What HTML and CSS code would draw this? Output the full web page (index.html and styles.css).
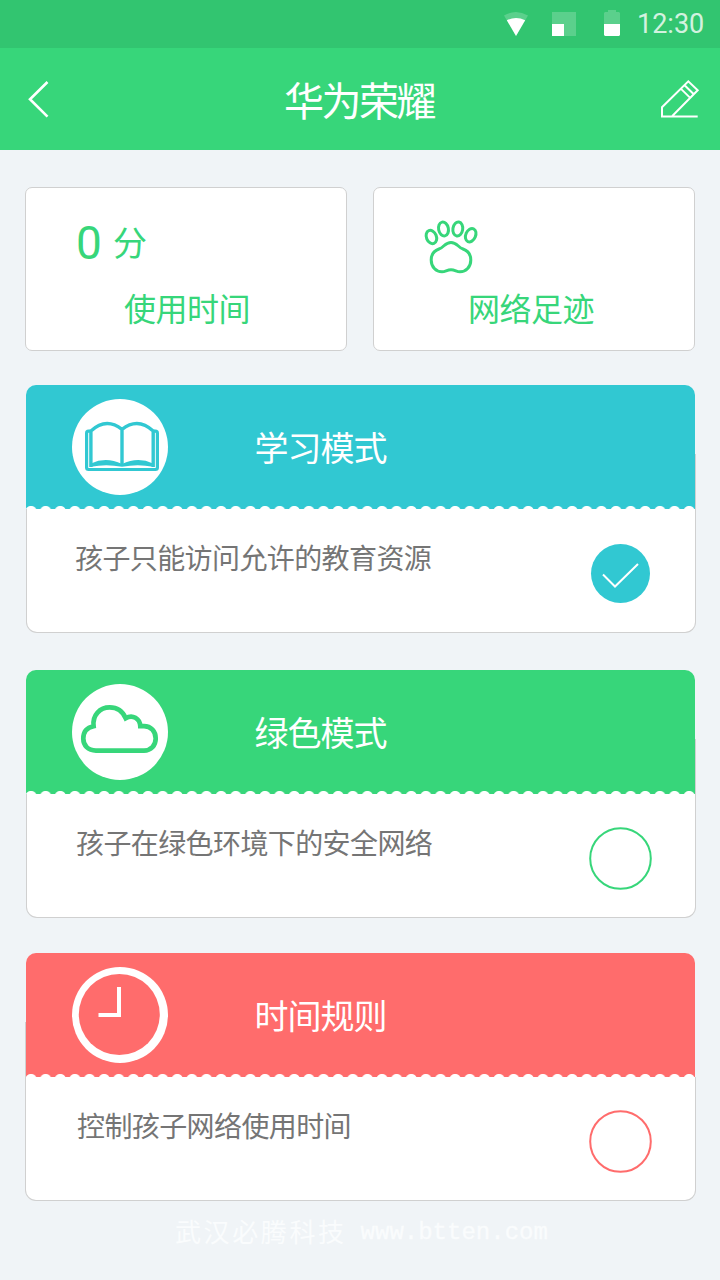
FILE: index.html
```html
<!DOCTYPE html>
<html lang="zh-CN">
<head>
    <meta charset="UTF-8">
    <meta name="viewport" content="width=device-width, initial-scale=1.0">
    <title>华为荣耀</title>
    <link rel="stylesheet" href="styles.css">
</head>
<body>
    <div class="status">
        <svg class="wifi" width="24" height="24" viewBox="0 0 24 24">
            <path d="M0 3.5Q12 -3.5 24 3.5L12 24Z" fill="#fff" fill-opacity=".2"/>
            <path d="M2.8 8.2Q12 3.8 21.2 8.2L12 24Z" fill="#fff"/>
        </svg>
        <svg class="signal" width="24" height="24">
            <path d="M0 0H24V24H0Z" fill="#fff" fill-opacity=".2"/>
            <path d="M0 12H12V24H0Z" fill="#fff"/>
        </svg>
        <svg class="battery" width="16" height="26">
            <path d="M4 0H12V2H15L16 3V14H0V3L1 2H4Z" fill="#fff" fill-opacity=".2"/>
            <path d="M0 14H16V25L15 26H1L0 25Z" fill="#fff"/>
        </svg>
        <span class="clock">12:30</span>
    </div>
    <header class="topbar">
        <svg width="24" height="40" viewBox="0 0 24 40" class="line">
            <path d="M21.5 3L4 20.2L21.5 37.7" stroke-width="2.6"/>
        </svg>
        <h1>华为荣耀</h1>
        <svg width="40" height="40" viewBox="0 0 40 40" class="line">
            <path d="M37.7 37.5H2V28.2L28.3 2.3L37.7 11.3L12.3 37M21 9.9L30.2 18.9M24.6 6.3L33.8 15.3" stroke-width="2"/>
        </svg>
    </header>

    <main>
        <div class="stats">
            <div class="stat">
                <p class="stat_top"><span class="num">0</span><span class="unit">分</span></p>
                <p class="stat_name name1">使用时间</p>
            </div>
            <div class="stat">
                <p class="stat_top">
                    <svg class="paw" width="56" height="56" viewBox="0 0 56 56">
                        <ellipse cx="8.4" cy="18" rx="5" ry="6.9" transform="rotate(-22 8.4 18)"/>
                        <ellipse cx="20.5" cy="10" rx="4.9" ry="7" transform="rotate(-12 20.5 10)"/>
                        <ellipse cx="34.8" cy="10" rx="4.9" ry="7" transform="rotate(9 34.8 10)"/>
                        <ellipse cx="47.7" cy="16.2" rx="4.9" ry="7" transform="rotate(24 47.7 16.2)"/>
                        <path d="M28 23.4C34 23.4 35 28.5 40 30C45 31.8 47.8 36 47.8 41C47.8 48 43 52.8 37 52.8C33.5 52.8 32 50.8 28 50.8C24 50.8 22.5 52.8 19 52.8C13 52.8 8.2 48 8.2 41C8.2 36 11 31.8 16 30C21 28.5 22 23.4 28 23.4Z"/>
                    </svg>
                </p>
                <p class="stat_name name2">网络足迹</p>
            </div>
        </div>

        <!-- 学习模式 -->
        <section class="card study">
            <div class="card_head">
                <svg width="96" height="96" viewBox="0 0 96 96">
                    <circle cx="48" cy="48" r="48" fill="#fff"/>
                    <g fill="none" stroke="#31c8d2" stroke-width="3.2">
                        <path d="M18 32.2H16.5Q14.6 32.2 14.6 34.2V68.5Q14.6 70.5 16.6 70.5H83.4Q85.4 70.5 85.4 68.5V34.2Q85.4 32.2 83.4 32.2H82"/>
                        <path d="M18.9 68V32Q34 17.8 50 30.3Q66 17.8 81.2 32V68M50 29.5V67" stroke-width="3.4"/>
                    </g>
                    <path d="M19 64.5Q34 57.5 50 65Q66 57.5 81 64.5V67.8Q66 64.5 50 67.8Q34 64.5 19 67.8Z" fill="#31c8d2"/>
                </svg>
                <h2>学习模式</h2>
            </div>
            <div class="card_body">
                <p class="desc1">孩子只能访问允许的教育资源</p>
                <svg class="check" width="64" height="64" viewBox="0 0 64 64">
                    <circle cx="31.5" cy="32.5" r="29.5" fill="#31c8d2"/>
                    <path d="M14 33.5L26 45.5L49 23" fill="none" stroke="#fff" stroke-width="2"/>
                </svg>
            </div>
        </section>

        <!-- 绿色模式 -->
        <section class="card green">
            <div class="card_head">
                <svg width="96" height="96" viewBox="0 0 96 96">
                    <circle cx="48" cy="48" r="48" fill="#fff"/>
                    <path d="M24 66.6C16 66.6 11.3 61.5 11.3 54.5C11.3 48 15 43.5 21.6 42.2C20.3 31 28 23.4 37.7 23.4C45 23.4 50.5 27 53.7 34.2C60.5 30 68 34.5 68.3 42.2H72C79 42.2 83.7 47.5 83.7 54.5C83.7 61.5 79 66.6 72 66.6Z" fill="none" stroke="#37d67a" stroke-width="4.7"/>
                </svg>
                <h2>绿色模式</h2>
            </div>
            <div class="card_body">
                <p class="desc2">孩子在绿色环境下的安全网络</p>
                <svg class="check" width="64" height="64" viewBox="0 0 64 64">
                    <circle cx="31.5" cy="32.5" r="30.3" fill="none" stroke="#37d67a" stroke-width="2"/>
                </svg>
            </div>
        </section>

        <!-- 时间规则 -->
        <section class="card time">
            <div class="card_head">
                <svg width="96" height="96" viewBox="0 0 96 96">
                    <circle cx="48" cy="48" r="48" fill="#fff"/>
                    <circle cx="47.3" cy="47.5" r="40.5" fill="#ff6c6c"/>
                    <path d="M47 20V48H26.5" fill="none" stroke="#fff" stroke-width="4"/>
                </svg>
                <h2>时间规则</h2>
            </div>
            <div class="card_body">
                <p class="desc3">控制孩子网络使用时间</p>
                <svg class="check" width="64" height="64" viewBox="0 0 64 64">
                    <circle cx="31.5" cy="32.5" r="30.3" fill="none" stroke="#ff6c6c" stroke-width="2"/>
                </svg>
            </div>
        </section>
    </main>
    <footer><span class="company">武汉必腾科技</span><span class="site">www.btten.com</span></footer>
</body>
</html>
```
FILE: styles.css
```css
*
{
    box-sizing: border-box;
    margin: 0;
    padding: 0;
}
body
{
    width: 720px;
    height: 1280px;
    overflow: hidden;
    background-color: #f0f4f7;
    font-family: "Noto Sans CJK SC", sans-serif;
    font-weight: 400;
}
svg
{
    display: block;
    flex: none;
}
h1, h2
{
    font-weight: 400;
    color: #fff;
    white-space: nowrap;
}

/* 状态栏 */
.status
{
    height: 48px;
    background-color: #32c570;
    display: flex;
    align-items: flex-start;
    justify-content: flex-end;
    padding: 12px 16px 0 0;
}
.signal
{
    margin-left: 24px;
}
.battery
{
    margin: -2px 17px 0 28px;
}
.clock
{
    width: 67px;
    font: 27px/25px Roboto, sans-serif;
    color: rgba(255,255,255,.8);
}

/* 标题栏 */
.topbar
{
    height: 102px;
    background-color: #37d67a;
    display: flex;
    align-items: center;
    justify-content: space-between;
    padding: 0 20px 0 26px;
}
.topbar h1
{
    font-size: 40px;
    line-height: 60px;
    letter-spacing: -2.5px;
    margin-left: 8px;
}
.line
{
    fill: none;
    stroke: #fff;
}

main
{
    padding: 37px 24px 0 25px;
}
.stats
{
    display: flex;
    gap: 26px;
    padding-right: 1px;
    margin-bottom: 34px;
}
.stat
{
    width: 322px;
    height: 164px;
    background-color: #fff;
    border: 1px solid #d0d0d0;
    border-radius: 7px;
    color: #37d67a;
}
.stat_top
{
    height: 95px;
    display: flex;
    align-items: center;
    padding: 12px 0 0 50px;
}
.num
{
    font: 46px/60px Roboto, sans-serif;
    width: 37px;
    padding-top: 3px;
}
.unit
{
    font-size: 34px;
    line-height: 50px;
}
.paw
{
    margin: 11px 0 0 -1px;
    fill: none;
    stroke: #37d67a;
    stroke-width: 3;
}
.stat_name
{
    font-size: 32px;
    line-height: 48px;
    letter-spacing: -.5px;
}
.name1
{
    padding-left: 98px;
}
.name2
{
    padding-left: 94px;
}

/* 模式卡片 */
.card
{
    width: 670px;
    height: 248px;
    margin: 0 0 37px 1px;
}
.card_head
{
    position: relative;
    width: 669px;
    height: 124px;
    border-radius: 10px 10px 0 0;
    display: flex;
    align-items: center;
    padding-left: 46px;
}
/* 波浪边 */
.card_head::before
{
    content: "";
    position: absolute;
    left: 0;
    right: 0;
    bottom: 0;
    height: 3px;
    background: radial-gradient(circle at 5px 5.6px, #fff 5.2px, transparent 6.2px) 0 0 / 14.64px 3px repeat-x;
}
.card_head::after
{
    content: "";
    position: absolute;
    right: -1px;
    top: 69px;
    bottom: 0;
    width: 1px;
    background-color: #d0d0d0;
}
.card_head h2
{
    font-size: 34px;
    line-height: 50px;
    letter-spacing: -1px;
    margin-left: 86.5px;
}
.card_body
{
    height: 124px;
    background-color: #fff;
    border: 1px solid #d0d0d0;
    border-top: none;
    border-radius: 0 0 11px 11px;
    display: flex;
    justify-content: space-between;
    padding: 28px 42px 0 48px;
}
.card_body p
{
    font-size: 28px;
    line-height: 40px;
    letter-spacing: -.6px;
    color: #757575;
}
.card_body .desc2
{
    padding-left: 1px;
}
.card_body .desc3
{
    padding-left: 3px;
}
.check
{
    margin-top: 4px;
}
.study .card_head
{
    background-color: #31c8d2;
}
.green .card_head
{
    background-color: #37d67a;
}
.time .card_head
{
    background-color: #ff6c6c;
}
.time .card_body
{
    width: 671px;
    margin-left: -1px;
}
.time .card_head::after
{
    right: auto;
    left: -1px;
}
.green
{
    margin-bottom: 35px;
}
.time
{
    margin-bottom: 0;
}

footer
{
    display: flex;
    align-items: center;
    gap: 14px;
    height: 58px;
    padding-left: 175px;
    color: #fafcfd;
}
.company
{
    font-size: 26px;
    letter-spacing: 2.6px;
}
.site
{
    font-family: "Liberation Mono", monospace;
    font-size: 24px;
    padding-top: 4px;
    -webkit-text-stroke: .4px #fafcfd;
}
```
